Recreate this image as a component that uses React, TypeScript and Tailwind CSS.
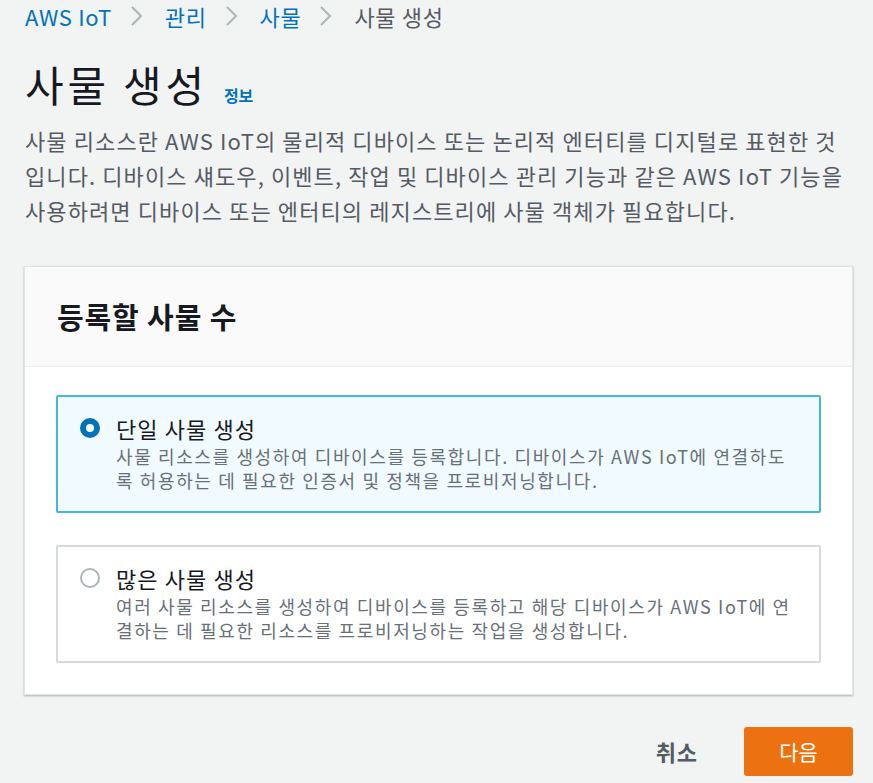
import React from "react";

const font = "font-['Noto_Sans_CJK_KR','Noto_Sans',sans-serif]";

function Chevron() {
  return (
    <svg width="13" height="22" viewBox="0 0 13 22" className="ml-[18px] mr-[22px]">
      <path d="M2 2 L11 11 L2 20" fill="none" stroke="#aab7b8" strokeWidth="2" />
    </svg>
  );
}

function Radio({ checked }: { checked: boolean }) {
  if (checked) {
    return (
      <span className="mt-[6px] flex h-[20px] w-[20px] shrink-0 items-center justify-center rounded-full bg-[#0073bb]">
        <span className="h-[8px] w-[8px] rounded-full bg-white" />
      </span>
    );
  }
  return (
    <span className="mt-[6px] h-[20px] w-[20px] shrink-0 rounded-full border-2 border-[#aab7b8] bg-white" />
  );
}

function Option({
  checked,
  title,
  lines,
}: {
  checked: boolean;
  title: string;
  lines: string[];
}) {
  return (
    <div
      className={
        checked
          ? "flex h-[118px] gap-[16px] rounded-[2px] border-2 border-[#44b9d6] bg-[#f1faff] pl-[22px] pt-[15px]"
          : "flex h-[118px] gap-[16px] rounded-[2px] border-2 border-[#d5dbdb] bg-white pl-[22px] pt-[15px]"
      }
    >
      <Radio checked={checked} />
      <div className="whitespace-nowrap">
        <div className="text-[22px] leading-[32px] tracking-[0.05em] text-[#16191f]">{title}</div>
        <div className="text-[18px] leading-[24px] tracking-[0.09em] text-[#687078]">
          {lines[0]}
          <br />
          {lines[1]}
        </div>
      </div>
    </div>
  );
}

export default function App() {
  return (
    <div className={`min-h-screen bg-[#f2f3f3] pl-[25px] pr-[20px] pt-[1px] ${font}`}>
      <nav className="flex items-center text-[22px] leading-[30px] tracking-[0.03em]">
        <span className="text-[#0073bb]">AWS IoT</span>
        <Chevron />
        <span className="text-[#0073bb]">관리</span>
        <Chevron />
        <span className="text-[#0073bb]">사물</span>
        <Chevron />
        <span className="text-[#545b64]">사물 생성</span>
      </nav>

      <div className="mt-[28px] flex items-baseline gap-[16px]">
        <h1 className="text-[42px] leading-[50px] tracking-[0.09em] text-[#16191f]">사물 생성</h1>
        <span className="text-[16px] font-bold text-[#0073bb]">정보</span>
      </div>

      <p className="mt-[14px] whitespace-nowrap text-[22px] leading-[35px] tracking-[0.05em] text-[#545b64]">
        사물 리소스란 AWS IoT의 물리적 디바이스 또는 논리적 엔터티를 디지털로 표현한 것
        <br />
        입니다. 디바이스 섀도우, 이벤트, 작업 및 디바이스 관리 기능과 같은 AWS IoT 기능을
        <br />
        사용하려면 디바이스 또는 엔터티의 레지스트리에 사물 객체가 필요합니다.
      </p>

      <section className="-ml-[1px] mt-[38px] border border-[#e1e4e4] bg-white shadow-[0_1px_2px_rgba(0,28,36,0.3)]">
        <div className="flex h-[100px] items-center border-b border-[#eaeded] bg-[#fafafa] px-[32px]">
          <h2 className="text-[29px] font-bold tracking-[0.03em] text-[#16191f]">등록할 사물 수</h2>
        </div>
        <div className="flex flex-col gap-[32px] px-[31px] pb-[31px] pt-[28px]">
          <Option
            checked
            title="단일 사물 생성"
            lines={[
              "사물 리소스를 생성하여 디바이스를 등록합니다. 디바이스가 AWS IoT에 연결하도",
              "록 허용하는 데 필요한 인증서 및 정책을 프로비저닝합니다.",
            ]}
          />
          <Option
            checked={false}
            title="많은 사물 생성"
            lines={[
              "여러 사물 리소스를 생성하여 디바이스를 등록하고 해당 디바이스가 AWS IoT에 연",
              "결하는 데 필요한 리소스를 프로비저닝하는 작업을 생성합니다.",
            ]}
          />
        </div>
      </section>

      <div className="mt-[32px] flex items-center justify-end gap-[46px]">
        <button className="text-[22px] font-bold tracking-[0.04em] text-[#545b64]">취소</button>
        <button className="h-[49px] w-[109px] rounded-[3px] bg-[#ec7211] text-[21px] text-white">
          다음
        </button>
      </div>
    </div>
  );
}
